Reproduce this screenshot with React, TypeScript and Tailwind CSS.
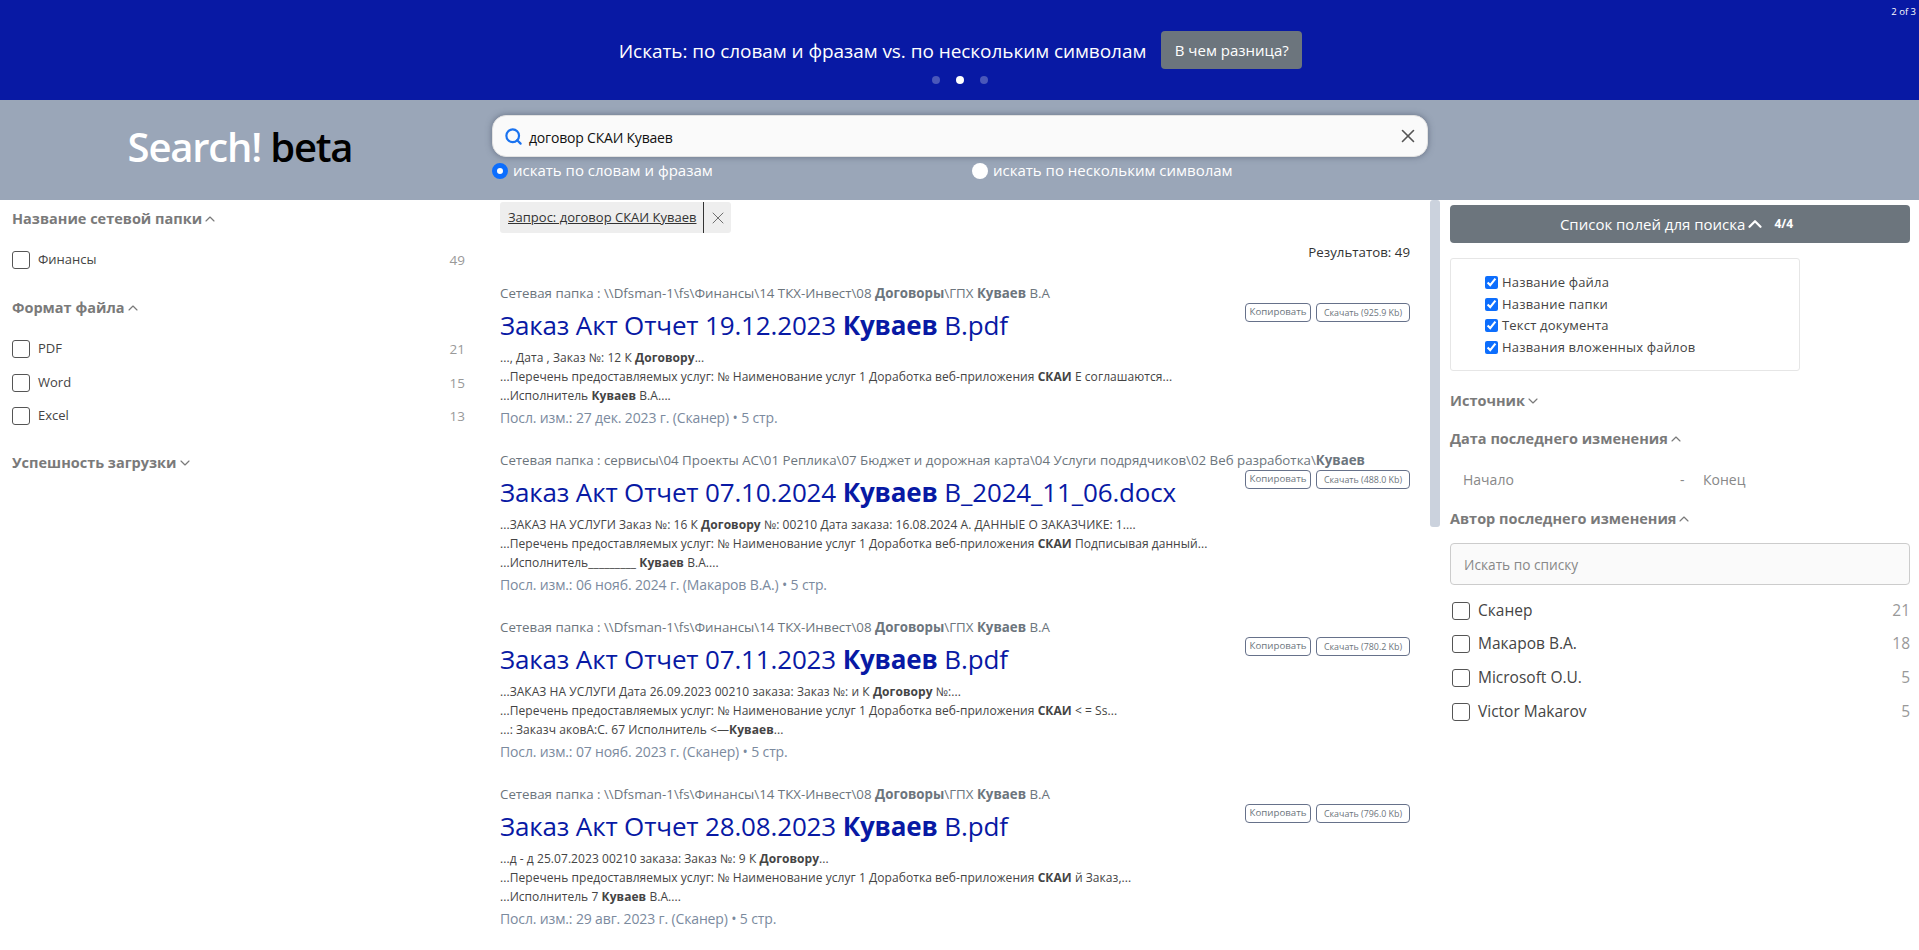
import { ChevronDown, ChevronUp, Search, X } from 'lucide-react'
import type { ReactNode } from 'react'

type Result = {
  path: ReactNode
  before: string
  after: string
  size: string
  lines: ReactNode[]
  meta: string
}

const b = (text: string) => <b className="font-bold">{text}</b>

const financePath = (
  <>
    Сетевая папка : \\Dfsman-1\fs\Финансы\14 ТКХ-Инвест\08 {b('Договоры')}\ГПХ {b('Куваев')} В.А
  </>
)

const results: Result[] = [
  {
    path: financePath,
    before: 'Заказ Акт Отчет 19.12.2023',
    after: 'В.pdf',
    size: '925.9 Kb',
    lines: [
      <>..., Дата , Заказ №: 12 К {b('Договору')}...</>,
      <>...Перечень предоставляемых услуг: № Наименование услуг 1 Доработка веб-приложения {b('СКАИ')} Е соглашаются...</>,
      <>...Исполнитель {b('Куваев')} В.А....</>,
    ],
    meta: 'Посл. изм.: 27 дек. 2023 г. (Сканер) • 5 стр.',
  },
  {
    path: (
      <>
        Сетевая папка : сервисы\04 Проекты АС\01 Реплика\07 Бюджет и дорожная карта\04 Услуги подрядчиков\02 Веб разработка\{b('Куваев')}
      </>
    ),
    before: 'Заказ Акт Отчет 07.10.2024',
    after: 'В_2024_11_06.docx',
    size: '488.0 Kb',
    lines: [
      <>...ЗАКАЗ НА УСЛУГИ Заказ №: 16 К {b('Договору')} №: 00210 Дата заказа: 16.08.2024 А. ДАННЫЕ О ЗАКАЗЧИКЕ: 1....</>,
      <>...Перечень предоставляемых услуг: № Наименование услуг 1 Доработка веб-приложения {b('СКАИ')} Подписывая данный...</>,
      <>...Исполнитель_________ {b('Куваев')} В.А....</>,
    ],
    meta: 'Посл. изм.: 06 нояб. 2024 г. (Макаров В.А.) • 5 стр.',
  },
  {
    path: financePath,
    before: 'Заказ Акт Отчет 07.11.2023',
    after: 'В.pdf',
    size: '780.2 Kb',
    lines: [
      <>...ЗАКАЗ НА УСЛУГИ Дата 26.09.2023 00210 заказа: Заказ №: и К {b('Договору')} №:...</>,
      <>...Перечень предоставляемых услуг: № Наименование услуг 1 Доработка веб-приложения {b('СКАИ')} {'< = Ss...'}</>,
      <>...: Заказч аковА:С. 67 Исполнитель {'<—'}{b('Куваев')}...</>,
    ],
    meta: 'Посл. изм.: 07 нояб. 2023 г. (Сканер) • 5 стр.',
  },
  {
    path: financePath,
    before: 'Заказ Акт Отчет 28.08.2023',
    after: 'В.pdf',
    size: '796.0 Kb',
    lines: [
      <>...д - д 25.07.2023 00210 заказа: Заказ №: 9 К {b('Договору')}...</>,
      <>...Перечень предоставляемых услуг: № Наименование услуг 1 Доработка веб-приложения {b('СКАИ')} й Заказ,...</>,
      <>...Исполнитель 7 {b('Куваев')} В.А....</>,
    ],
    meta: 'Посл. изм.: 29 авг. 2023 г. (Сканер) • 5 стр.',
  },
]

function FacetTitle({ title, open, className }: { title: string; open: boolean; className: string }) {
  return (
    <div className={`flex h-6 items-center text-[14.5px] font-bold text-[#7a7a7a] ${className}`}>
      {title}
      {open ? (
        <ChevronUp className="size-4" strokeWidth={1.75} />
      ) : (
        <ChevronDown className="size-4" strokeWidth={1.75} />
      )}
    </div>
  )
}

function FacetRow({ label, count, big, className }: { label: string; count: number; big?: boolean; className: string }) {
  return (
    <label className={`flex h-[20px] items-center ${className}`}>
      <input
        type="checkbox"
        className="size-[18px] shrink-0 appearance-none rounded-[3px] border border-[#555] bg-white"
      />
      <span className={big ? 'ml-2 text-[15.5px] text-[#444]' : 'ml-2 text-[13px] text-[#444]'}>{label}</span>
      <span className={big ? 'ml-auto text-[15.5px] text-[#999]' : 'ml-auto text-[13.5px] text-[#999]'}>{count}</span>
    </label>
  )
}

function ResultCard({ r }: { r: Result }) {
  return (
    <article className="h-[167px] pt-[24px]">
      <div className="h-[18px] text-[13.3px] leading-[18px] whitespace-nowrap text-[#6c757d]">{r.path}</div>
      <div className="flex items-start justify-between">
        <h2 className="mt-[4px] h-[38px] text-[26px] leading-[38px] font-normal tracking-[-0.006em] text-[#0819a4]">
          {r.before} <b className="font-bold">Куваев</b> {r.after}
        </h2>
        <div className="mt-[1px] flex gap-[5px]">
          <button className="h-[19px] w-[66px] rounded-[4px] border border-[#66718a] text-[9.7px] text-[#6c757d]">
            Копировать
          </button>
          <button className="h-[19px] w-[94px] rounded-[4px] border border-[#66718a] text-[8.9px] text-[#6c757d]">
            Скачать ({r.size})
          </button>
        </div>
      </div>
      <div className="mt-[4px] text-[12px] leading-[19px] tracking-[0.005em] whitespace-nowrap text-[#444]">
        {r.lines.map((line, i) => (
          <div key={i}>{line}</div>
        ))}
      </div>
      <div className="mt-[3px] text-[14px] leading-[20px] tracking-[-0.01em] text-[#7b8a9e]">{r.meta}</div>
    </article>
  )
}

export default function App() {
  return (
    <div className="flex h-screen flex-col overflow-hidden bg-white font-['Open_Sans','Noto_Sans',sans-serif]">
      {/* Banner */}
      <header className="flex h-[100px] shrink-0 flex-col bg-[#0819a4] text-white">
        <div className="flex h-[31px] justify-end pt-[5px] pr-[3px] text-[9.5px] leading-[14px]">2 of 3</div>
        <div className="flex items-center justify-center gap-[15px] pl-[2px]">
          <span className="mt-[3px] text-[19px] tracking-[-0.003em]">Искать: по словам и фразам vs. по нескольким символам</span>
          <button className="h-[38px] w-[141px] rounded-[4px] bg-[#6c757d] text-[15px] text-white">
            В чем разница?
          </button>
        </div>
        <div className="mt-[7px] flex justify-center gap-[16px]">
          <span className="size-2 rounded-full bg-[#4a57ba]" />
          <span className="size-2 rounded-full bg-white" />
          <span className="size-2 rounded-full bg-[#4a57ba]" />
        </div>
      </header>

      {/* Search */}
      <section className="flex h-[100px] shrink-0 bg-[#9aa6b8]">
        <div className="flex w-[492px] shrink-0 justify-center pt-[20px] pr-[12px]">
          <h1 className="text-[40px] leading-[54px] font-semibold tracking-[-0.03em] text-white">
            Search! <span className="text-black">beta</span>
          </h1>
        </div>
        <div className="w-[936px] pt-[15px]">
          <div className="flex h-[42px] items-center rounded-[14px] border border-[#e2e2e2] bg-[#fafafa] pr-[8px] pl-[11px] shadow-[0_0_6px_rgba(70,80,100,0.6)]">
            <Search className="size-[19px] text-[#1a73f0]" strokeWidth={2.75} />
            <span className="mt-[2px] ml-[6px] text-[14px] tracking-[-0.014em] text-[#111]">договор СКАИ Куваев</span>
            <X className="ml-auto size-[22px] text-[#555]" strokeWidth={1.75} />
          </div>
          <div className="mt-[3px] flex h-[22px] items-center text-[15px] text-white">
            <label className="flex w-[480px] items-center">
              <input type="radio" name="mode" defaultChecked className="size-[16px] appearance-none rounded-full border-[5px] border-[#0d6efd] bg-white" />
              <span className="-mt-[2px] ml-[5px]">искать по словам и фразам</span>
            </label>
            <label className="flex items-center">
              <input type="radio" name="mode" className="size-[16px] appearance-none rounded-full bg-white" />
              <span className="-mt-[2px] ml-[5px]">искать по нескольким символам</span>
            </label>
          </div>
        </div>
      </section>

      <main className="flex min-h-0 flex-1">
        {/* Left filters */}
        <aside className="w-[500px] shrink-0 pr-[35px] pl-[12px]">
          <FacetTitle title="Название сетевой папки" open className="mt-[7px]" />
          <FacetRow label="Финансы" count={49} className="mt-[19px]" />
          <FacetTitle title="Формат файла" open className="mt-[26px]" />
          <FacetRow label="PDF" count={21} className="mt-[19px]" />
          <FacetRow label="Word" count={15} className="mt-[14px]" />
          <FacetRow label="Excel" count={13} className="mt-[13px]" />
          <FacetTitle title="Успешность загрузки" open={false} className="mt-[25px]" />
        </aside>

        {/* Results */}
        <div className="w-[910px] shrink-0 overflow-hidden">
          <div className="mt-[2px] flex h-[31px] w-[231px] items-center rounded-[3px] bg-[#eeeeee] pl-[8px] text-[13px] text-[#333]">
            <span className="underline">Запрос: договор СКАИ Куваев</span>
            <span className="mr-[4px] ml-[7px] h-full w-px shrink-0 bg-[#333]" />
            <X className="size-[20px] text-[#555]" strokeWidth={1} />
          </div>
          <div className="mt-[9px] h-[20px] text-right text-[13.3px] leading-[20px] text-[#333]">Результатов: 49</div>
          <div className="-mt-[2px]">
            {results.map((r, i) => (
              <ResultCard key={i} r={r} />
            ))}
          </div>
        </div>

        {/* Scrollbar */}
        <div className="ml-[20px] w-[10px] shrink-0">
          <div className="h-[327px] rounded-[3px] bg-[#cbd2dd]" />
        </div>

        {/* Right filters */}
        <aside className="ml-[10px] w-[460px] shrink-0">
          <button className="mt-[5px] flex h-[38px] w-full items-center justify-center rounded-[4px] bg-[#6c757d] pr-[7px] text-[15px] text-white">
            Список полей для поиска
            <ChevronUp className="-ml-[1px] size-[22px]" strokeWidth={2.5} />
            <span className="ml-[8px] text-[12px] font-bold">4/4</span>
          </button>
          <div className="mt-[15px] h-[113px] w-[350px] rounded-[3px] border border-[#e6e6e6] pt-[13px] pl-[34px] text-[13px] leading-[21.6px] tracking-[0.015em] text-[#444]">
            {['Название файла', 'Название папки', 'Текст документа', 'Названия вложенных файлов'].map(label => (
              <label key={label} className="flex items-center">
                <input type="checkbox" defaultChecked className="size-[13px] accent-[#0d6efd]" />
                <span className="ml-[4px]">{label}</span>
              </label>
            ))}
          </div>
          <FacetTitle title="Источник" open={false} className="mt-[18px]" />
          <FacetTitle title="Дата последнего изменения" open className="mt-[14px]" />
          <div className="mt-[16px] flex h-[24px] items-center text-[14px] text-[#888]">
            <span className="ml-[13px] w-[217px]">Начало</span>
            <span className="w-[23px]">-</span>
            <span>Конец</span>
          </div>
          <FacetTitle title="Автор последнего изменения" open className="mt-[16px]" />
          <input
            placeholder="Искать по списку"
            className="mt-[12px] h-[42px] w-full rounded-[4px] border border-[#ccc] bg-[#fafafa] px-[13px] text-[13.7px] placeholder:text-[#888]"
          />
          <div className="pl-[2px]">
            <FacetRow big label="Сканер" count={21} className="mt-[16px]" />
            <FacetRow big label="Макаров В.А." count={18} className="mt-[13px]" />
            <FacetRow big label="Microsoft O.U." count={5} className="mt-[14px]" />
            <FacetRow big label="Victor Makarov" count={5} className="mt-[14px]" />
          </div>
        </aside>
      </main>
    </div>
  )
}
